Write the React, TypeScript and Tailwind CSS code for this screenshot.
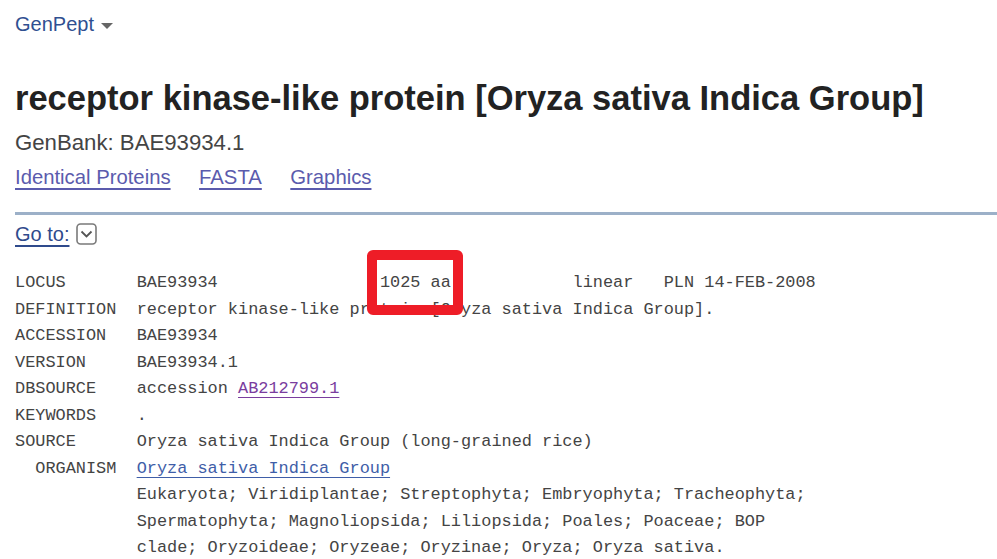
const record = [
  { label: "LOCUS", text: "BAE93934                1025 aa            linear   PLN 14-FEB-2008" },
  { label: "DEFINITION", text: "receptor kinase-like protein [Oryza sativa Indica Group]." },
  { label: "ACCESSION", text: "BAE93934" },
  { label: "VERSION", text: "BAE93934.1" },
];

function GoToIcon() {
  return (
    <svg width="21" height="22" viewBox="0 0 21 22" className="inline-block">
      <rect x="1" y="1" width="19" height="20" rx="3.5" fill="#fff" stroke="#7a7a7a" strokeWidth="1.6" />
      <path d="M5.5 8.5 L10.5 13.5 L15.5 8.5" fill="none" stroke="#555" strokeWidth="1.8" />
    </svg>
  );
}

export default function App() {
  return (
    <div className="min-h-screen bg-white pl-[15px] font-['Liberation_Sans',Arial,sans-serif] text-[#222]">
      <div className="pt-[12px] flex items-center gap-[7px] text-[20px] leading-[24px] text-[#2f4f91]">
        <span>GenPept</span>
        <span className="mt-[3px] w-0 h-0 border-l-[6px] border-r-[6px] border-t-[6px] border-l-transparent border-r-transparent border-t-[#666]" />
      </div>

      <h1 className="mt-[42px] text-[34.5px] leading-[40px] font-bold text-[#222]">
        receptor kinase-like protein [Oryza sativa Indica Group]
      </h1>

      <p className="mt-[11px] text-[22.2px] leading-[28px] text-[#444]">GenBank: BAE93934.1</p>

      <div className="mt-[6px] flex gap-[28.5px] text-[20.3px] leading-[28px] text-[#5b5bad]">
        <a className="underline underline-offset-[4px]" href="#">Identical Proteins</a>
        <a className="underline underline-offset-[4px]" href="#">FASTA</a>
        <a className="underline underline-offset-[4px]" href="#">Graphics</a>
      </div>

      <div className="mt-[21px] h-[3px] bg-[#9cb0c8]" />

      <div className="mt-[5px] flex items-center gap-[7px] text-[20px] leading-[28px]">
        <a className="text-[#2f4a8c] underline underline-offset-[4px]" href="#">Go to:</a>
        <GoToIcon />
      </div>

      <div className="relative mt-[22px]">
        <pre className="font-['Liberation_Mono','Courier_New',monospace] text-[16.9px] leading-[26.5px] text-[#444]">
          {record.map((r) => (
            <div key={r.label}>{r.label.padEnd(12, " ")}{r.text}</div>
          ))}
          <div>
            {"DBSOURCE    accession "}
            <a className="text-[#7a3d9e] underline underline-offset-[4px]" href="#">AB212799.1</a>
          </div>
          <div>{"KEYWORDS    ."}</div>
          <div>{"SOURCE      Oryza sativa Indica Group (long-grained rice)"}</div>
          <div>
            {"  ORGANISM  "}
            <a className="text-[#3f5ea8] underline underline-offset-[4px]" href="#">Oryza sativa Indica Group</a>
          </div>
          <div>{"            Eukaryota; Viridiplantae; Streptophyta; Embryophyta; Tracheophyta;"}</div>
          <div>{"            Spermatophyta; Magnoliopsida; Liliopsida; Poales; Poaceae; BOP"}</div>
          <div>{"            clade; Oryzoideae; Oryzeae; Oryzinae; Oryza; Oryza sativa."}</div>
        </pre>
        {/* highlight box over the length */}
        <div className="absolute left-[352px] top-[-20px] w-[96px] h-[65px] rounded-[6px] border-[10px] border-[#ee1d27]" />
      </div>
    </div>
  );
}
